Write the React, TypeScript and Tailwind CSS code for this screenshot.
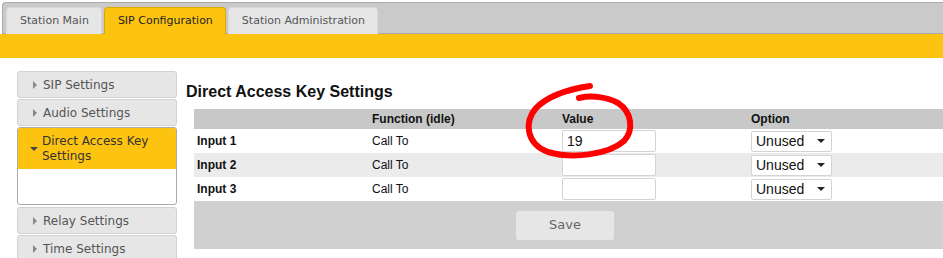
const tabs = [
  { label: 'Station Main', active: false },
  { label: 'SIP Configuration', active: true },
  { label: 'Station Administration', active: false },
];

const rows = [
  { label: 'Input 1', fn: 'Call To', value: '19' },
  { label: 'Input 2', fn: 'Call To', value: '' },
  { label: 'Input 3', fn: 'Call To', value: '' },
];

function SideItem({ label }: { label: string }) {
  return (
    <div className="flex h-[27px] items-center rounded-[3px] border border-[#d2d2d2] bg-[#e6e6e6] pl-[15px] text-[12px] text-[#555]">
      <span className="mr-[6px] h-0 w-0 border-y-[4px] border-l-[4px] border-y-transparent border-l-[#888]" />
      {label}
    </div>
  );
}

function Select() {
  return (
    <div className="flex h-[21px] w-[81px] items-center justify-between rounded-[2px] border border-[#d4d4d4] bg-white pl-[4px] pr-[6px] text-[14px] text-[#111]">
      <span>Unused</span>
      <span className="h-0 w-0 border-x-[4px] border-t-[4px] border-x-transparent border-t-[#222]" />
    </div>
  );
}

export default function App() {
  return (
    <div className="relative h-[258px] w-[943px] overflow-hidden bg-white font-['Liberation_Sans',Arial,sans-serif]">
      {/* tab bar */}
      <div className="ml-[2px] mt-[2px] flex h-[32px] items-end rounded-tl-[4px] border-l border-t border-b border-[#aaa] bg-[#cacaca] pl-[3px] font-['DejaVu_Sans',Verdana,sans-serif] text-[11px]">
        {tabs.map((t) => (
          <div
            key={t.label}
            className={`-mb-px mr-[2px] flex h-[27px] items-center rounded-t-[4px] border border-b-0 pl-[13px] pr-[12px] ${
              t.active
                ? 'border-[#d9a900] bg-[#fdc311] text-[#222]'
                : 'border-[#d8d8d8] bg-[#e6e6e6] text-[#555]'
            }`}
          >
            {t.label}
          </div>
        ))}
      </div>
      <div className="h-[24px] bg-[#fdc311]" />

      <div className="flex">
        {/* sidebar */}
        <div className="ml-[17px] flex w-[160px] flex-col gap-[1px] pt-[13px] font-['DejaVu_Sans',Verdana,sans-serif]">
          <SideItem label="SIP Settings" />
          <SideItem label="Audio Settings" />
          <div className="mb-[1px] h-[78px] overflow-hidden rounded-[3px] border border-[#aaa] bg-white">
            <div className="flex h-[41px] items-center bg-[#fdc311] pl-[12px] text-[12px] leading-[15px] text-[#333]">
              <span className="mr-[4px] h-0 w-0 border-x-[4px] border-t-[4px] border-x-transparent border-t-[#444]" />
              <span>
                Direct Access Key
                <br />
                Settings
              </span>
            </div>
          </div>
          <SideItem label="Relay Settings" />
          <SideItem label="Time Settings" />
        </div>

        {/* main */}
        <div className="ml-[9px] flex-1 pt-[24px]">
          <h1 className="text-[16px] font-bold leading-[20px] text-[#111]">Direct Access Key Settings</h1>
          <div className="ml-[8px] mt-[7px] text-[12px] text-[#111]">
            <div className="grid h-[20px] grid-cols-[178px_190px_189px_1fr] items-center bg-[#c8c8c8] font-bold">
              <span />
              <span>Function (idle)</span>
              <span>Value</span>
              <span>Option</span>
            </div>
            {rows.map((r, i) => (
              <div
                key={r.label}
                className={`grid h-[24px] grid-cols-[178px_190px_189px_1fr] items-center ${
                  i === 1 ? 'bg-[#ebebeb]' : 'bg-white'
                }`}
              >
                <span className="pl-[3px] font-bold">{r.label}</span>
                <span>{r.fn}</span>
                <div className="flex h-[22px] w-[94px] items-center rounded-[2px] border border-[#d4d4d4] bg-white pl-[4px] text-[14px]">
                  {r.value}
                </div>
                <Select />
              </div>
            ))}
            <div className="flex h-[48px] items-center bg-[#d1d0d1] pl-[322px]">
              <div className="flex h-[29px] w-[98px] items-center justify-center rounded-[3px] bg-[#e6e6e6] font-['DejaVu_Sans',Verdana,sans-serif] text-[13px] text-[#666]">
                Save
              </div>
            </div>
          </div>
        </div>
      </div>

      {/* red marker annotation */}
      <svg className="pointer-events-none absolute left-0 top-0" width="943" height="258">
        <path
          d="M590,86 C570,89 548,96 536,108 C524,122 526,144 548,152 C572,159 608,155 624,141 C634,130 632,112 618,103 C607,97 592,95 579,98"
          fill="none"
          stroke="#f00"
          strokeWidth="6"
          strokeLinecap="round"
        />
      </svg>
    </div>
  );
}
